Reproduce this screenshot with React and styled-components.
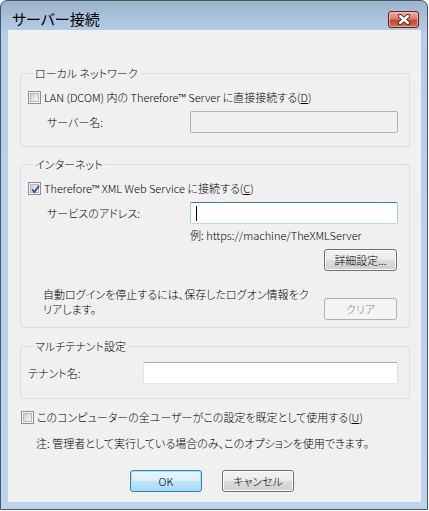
import React from 'react';
import styled, { createGlobalStyle } from 'styled-components';

const Global = createGlobalStyle`
  html, body { margin: 0; padding: 0; background: #fff; }
  body {
    font-family: "Noto Sans CJK JP", "Noto Sans", sans-serif;
    font-size: 11px;
    font-weight: 300;
    color: #000;
    font-feature-settings: "palt";
  }
  * { box-sizing: border-box; }
`;

const Window = styled.div`
  width: 428px;
  height: 510px;
  border: 1px solid #4b5664;
  border-radius: 7px 7px 0 0;
  background: linear-gradient(#9db4cd 0px, #b5cde6 32px, #bcd4ec 100%);
  padding: 0 6px 7px 7px;
  display: flex;
  flex-direction: column;
`;

const TitleBar = styled.div`
  height: 29px;
  display: flex;
  align-items: center;
  justify-content: space-between;
  padding: 7px 2px 0 4px;
`;

const Title = styled.div`
  font-size: 15px;
  font-weight: 400;
  line-height: 18px;
  color: #000;
`;

const CloseButton = styled.div`
  width: 31px;
  height: 17px;
  border: 1px solid #5b2121;
  border-radius: 3px;
  background: linear-gradient(#e9a99a 0%, #d98371 45%, #c5482e 55%, #cf6a4e 100%);
  box-shadow: inset 0 0 0 1px rgba(255, 220, 210, 0.55);
  display: flex;
  align-items: center;
  justify-content: center;
`;

const Client = styled.div`
  flex: 1;
  background: #f0f0f0;
  display: flex;
  flex-direction: column;
  padding: 0 11px 0 12px;
`;

const Group = styled.fieldset`
  margin: ${p => p.$top}px 0 0 0;
  padding: 8px 11px ${p => p.$bottom}px 7px;
  border: 1px solid #d5dfe5;
  border-radius: 3px;
  min-width: 0;
  display: flex;
  flex-direction: column;
`;

const Legend = styled.legend`
  padding: 0 2px;
  margin-left: 5px;
  line-height: 16px;
`;

const CheckRow = styled.label`
  display: flex;
  align-items: center;
  height: 16px;
  line-height: 16px;
  gap: 3px;
  margin: ${p => p.$top || 0}px 0 0 ${p => p.$indent || 0}px;
  white-space: nowrap;
`;

const Box = styled.span`
  width: 13px;
  height: 13px;
  border: 1px solid #8e8f8f;
  background: #f4f4f4;
  padding: 1px;
  display: flex;
  position: relative;
  flex: none;
`;

const BoxInner = styled.span`
  flex: 1;
  border: 1px solid #b4b8be;
  background: linear-gradient(135deg, #c9ccd2 0%, #e4e6e9 55%, #f8f8f8 100%);
`;

const CheckMark = styled.svg`
  position: absolute;
  left: 0;
  top: 0;
`;

const U = styled.span`
  text-decoration: underline;
`;

const FieldRow = styled.div`
  display: flex;
  align-items: center;
  margin-top: ${p => p.$top || 0}px;
  padding-left: ${p => p.$indent || 0}px;
`;

const FieldLabel = styled.span`
  width: ${p => p.$w}px;
  flex: none;
  line-height: 16px;
`;

const TextBox = styled.div`
  flex: 1;
  height: 22px;
  border: 1px solid;
  border-radius: 2px;
  border-color: ${p =>
    p.$state === 'focused'
      ? '#3d7bad #a4c9e3 #b7d9ed #a4c9e3'
      : p.$state === 'disabled'
      ? '#adb2b5'
      : '#abadb3 #dbdfe6 #e3e9ef #e2e3ea'};
  background: ${p => (p.$state === 'disabled' ? '#f0f0f0' : '#fff')};
  display: flex;
  align-items: center;
  padding-left: 5px;
`;

const Caret = styled.span`
  width: 1px;
  height: 15px;
  background: #000;
`;

const Hint = styled.div`
  margin-top: 3px;
  padding-left: 162px;
  line-height: 16px;
  white-space: nowrap;
`;

const Button = styled.div`
  width: ${p => p.$w || 73}px;
  height: 22px;
  border: 1px solid ${p => (p.$disabled ? '#adb2b5' : p.$default ? '#3c7fb1' : '#707070')};
  border-radius: 3px;
  background: ${p =>
    p.$disabled
      ? '#f4f4f4'
      : p.$default
      ? 'linear-gradient(#eaf6fd 0%, #d9f0fc 50%, #bee6fd 50%, #a7d9f5 100%)'
      : 'linear-gradient(#f2f2f2 0%, #ebebeb 50%, #dddddd 50%, #cfcfcf 100%)'};
  box-shadow: ${p => (p.$disabled ? 'none' : p.$default ? 'inset 0 0 0 1px #9fe0fb' : 'inset 0 0 0 1px #fcfcfc')};
  color: ${p => (p.$disabled ? '#838383' : '#000')};
  display: flex;
  align-items: center;
  justify-content: center;
  line-height: 16px;
  flex: none;
`;

const RightButtonRow = styled.div`
  display: flex;
  justify-content: flex-end;
  margin-top: 6px;
  padding-right: 1px;
`;

const ClearRow = styled.div`
  display: flex;
  align-items: flex-start;
  margin-top: 16px;
  padding-right: 1px;
`;

const ClearText = styled.div`
  margin-left: 15px;
  line-height: 15px;
  white-space: nowrap;
`;

const ClearButtonWrap = styled.div`
  margin-left: auto;
  margin-top: 11px;
`;

const Note = styled.div`
  margin-top: 10px;
  padding-left: 16px;
  line-height: 16px;
  white-space: nowrap;
`;

const DialogButtons = styled.div`
  display: flex;
  gap: 20px;
  margin-top: 19px;
  padding-left: 110px;
`;

function CheckBox({ checked }) {
  return (
    <Box>
      <BoxInner />
      {checked && (
        <CheckMark width="13" height="13" viewBox="0 0 13 13">
          <path d="M3.2 6.4 L5.4 9.2 L10 2.8" fill="none" stroke="#33539e" strokeWidth="1.9" strokeLinejoin="round" />
        </CheckMark>
      )}
    </Box>
  );
}

export default function App() {
  return (
    <>
      <Global />
      <Window>
        <TitleBar>
          <Title>サーバー接続</Title>
          <CloseButton>
            <svg width="14" height="11" viewBox="0 0 14 11">
              <path d="M3 2 L11 9 M11 2 L3 9" stroke="#4a2020" strokeWidth="4.2" strokeLinecap="round" />
              <path d="M3 2 L11 9 M11 2 L3 9" stroke="#ffffff" strokeWidth="2.4" strokeLinecap="round" />
            </svg>
          </CloseButton>
        </TitleBar>
        <Client>
          <Group $top={35} $bottom={13}>
            <Legend>ローカル ネットワーク</Legend>
            <CheckRow>
              <CheckBox />
              <span>
                LAN (DCOM) 内の Therefore™ Server に直接接続する(<U>D</U>)
              </span>
            </CheckRow>
            <FieldRow $top={6} $indent={19}>
              <FieldLabel $w={143}>サーバー名:</FieldLabel>
              <TextBox $state="disabled" />
            </FieldRow>
          </Group>

          <Group $top={9} $bottom={7}>
            <Legend>インターネット</Legend>
            <CheckRow>
              <CheckBox checked />
              <span>
                Therefore™ XML Web Service に接続する(<U>C</U>)
              </span>
            </CheckRow>
            <FieldRow $top={6} $indent={19}>
              <FieldLabel $w={143}>サービスのアドレス:</FieldLabel>
              <TextBox $state="focused">
                <Caret />
              </TextBox>
            </FieldRow>
            <Hint>例: https://machine/TheXMLServer</Hint>
            <RightButtonRow>
              <Button $w={73}>詳細設定...</Button>
            </RightButtonRow>
            <ClearRow>
              <ClearText>
                自動ログインを停止するには、保存したログオン情報をク
                <br />
                リアします。
              </ClearText>
              <ClearButtonWrap>
                <Button $w={73} $disabled>
                  クリア
                </Button>
              </ClearButtonWrap>
            </ClearRow>
          </Group>

          <Group $top={10} $bottom={14}>
            <Legend>マルチテナント設定</Legend>
            <FieldRow>
              <FieldLabel $w={115}>テナント名:</FieldLabel>
              <TextBox />
            </FieldRow>
          </Group>

          <CheckRow $top={10} $indent={1}>
            <CheckBox />
            <span>
              このコンピューターの全ユーザーがこの設定を既定として使用する(<U>U</U>)
            </span>
          </CheckRow>
          <Note>注: 管理者として実行している場合のみ、このオプションを使用できます。</Note>
          <DialogButtons>
            <Button $w={72} $default>
              OK
            </Button>
            <Button $w={72}>キャンセル</Button>
          </DialogButtons>
        </Client>
      </Window>
    </>
  );
}
